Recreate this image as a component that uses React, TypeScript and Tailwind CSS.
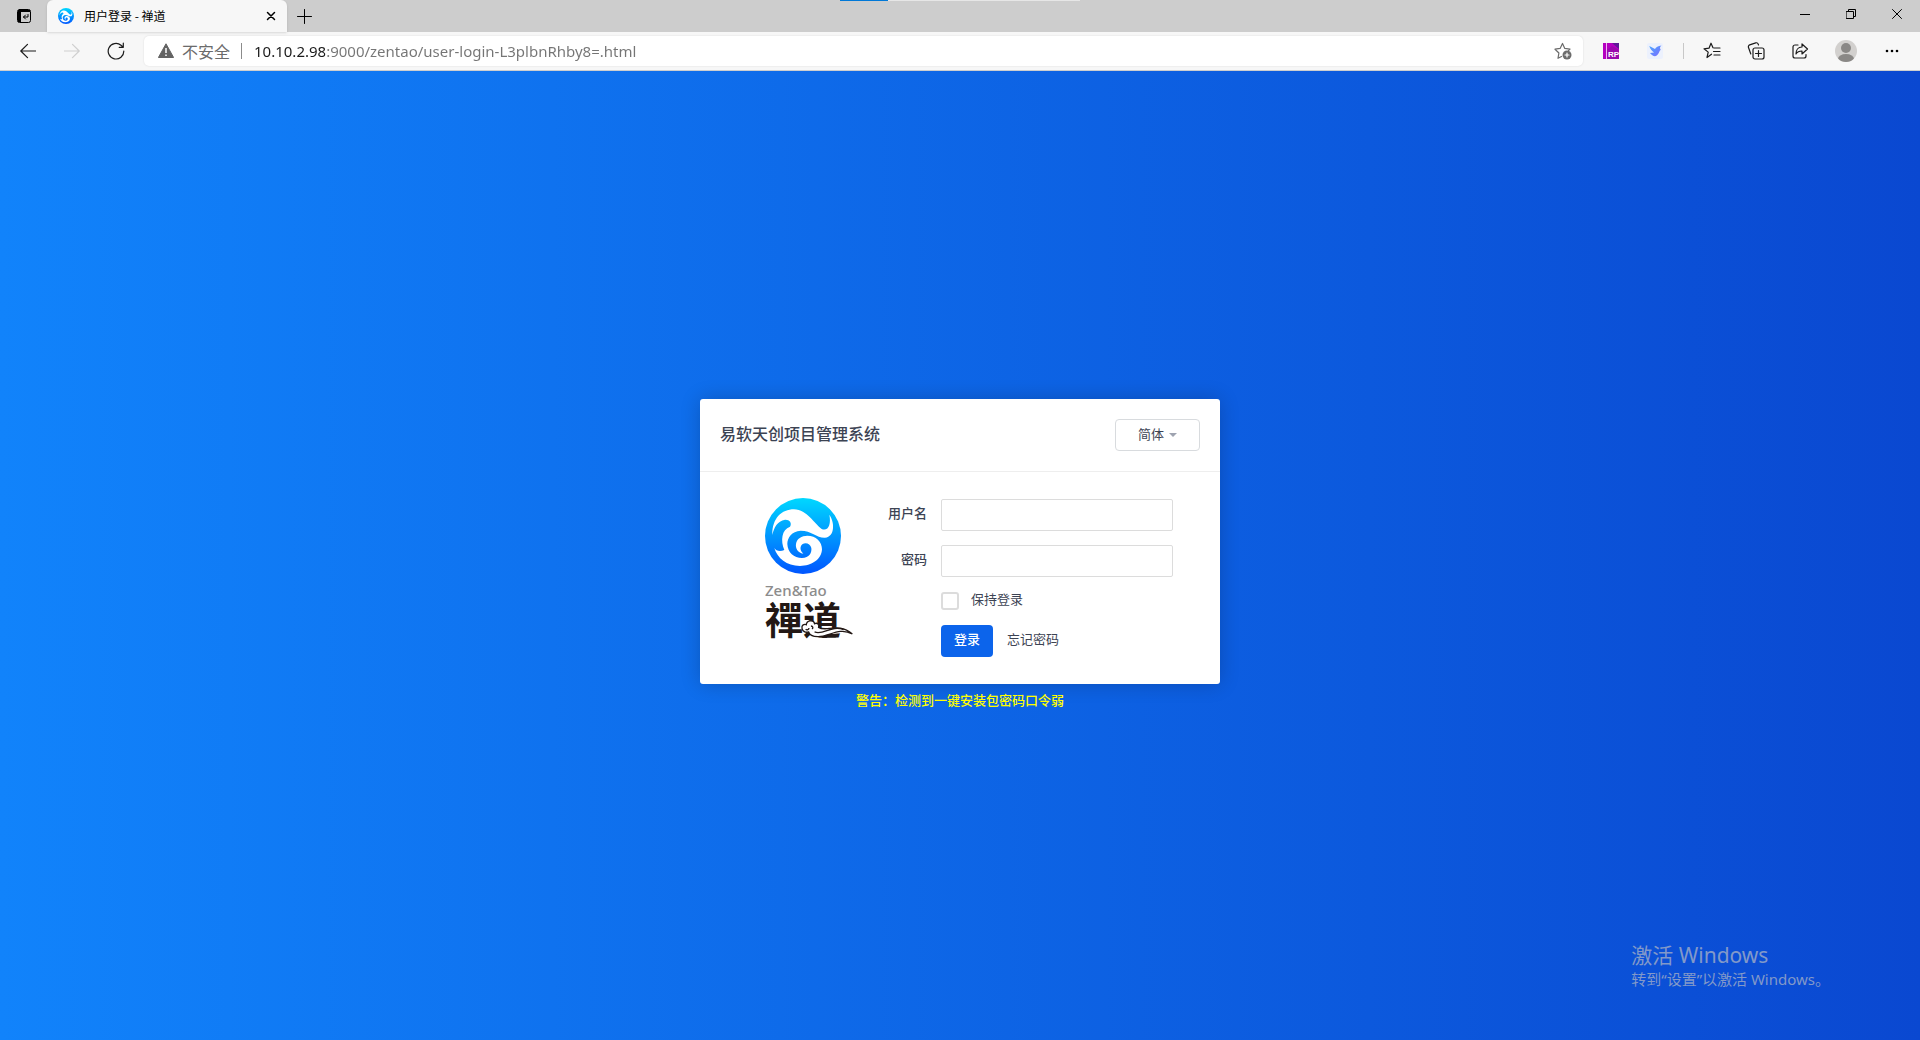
import React, { useState } from "react";

const swirl =
  "M247 435C246 385 275 358 312 358C352 360 372 400 395 417C415 425 424 402 418 374C434 395 436 440 405 443C380 444 365 422 332 422C305 424 292 443 292 462C293 488 312 504 336 504C358 504 366 488 364 474C361 460 346 456 337 463C328 471 331 483 340 491C322 488 316 474 318 462C320 446 335 437 352 437C378 437 396 455 396 478C395 508 365 528 330 528C290 527 262 505 253 474C258 483 270 486 283 480C271 452 275 418 300 410C307 398 298 388 285 389C262 393 252 412 247 435Z";

function WaveLogo({ id, className }: { id: string; className: string }) {
  return (
    <svg viewBox="225 324 228 228" className={className} aria-hidden="true">
      <defs>
        <linearGradient id={id} x1="0" y1="0" x2="0" y2="1">
          <stop offset="0" stopColor="#00d8ff" />
          <stop offset="1" stopColor="#0055ff" />
        </linearGradient>
      </defs>
      <circle cx="339" cy="438" r="114" fill={`url(#${id})`} />
      <path d={swirl} fill="#fff" />
    </svg>
  );
}

function IconButton({ label, className = "", children }: { label: string; className?: string; children: React.ReactNode }) {
  return (
    <button type="button" aria-label={label} className={`flex shrink-0 items-center justify-center ${className}`}>
      {children}
    </button>
  );
}

function Line({ size = 16, className = "", width = 1.2, children }: { size?: number; className?: string; width?: number; children: React.ReactNode }) {
  return (
    <svg
      width={size}
      height={size}
      viewBox={`0 0 ${size} ${size}`}
      fill="none"
      stroke="currentColor"
      strokeWidth={width}
      strokeLinecap="round"
      strokeLinejoin="round"
      className={className}
      aria-hidden="true"
    >
      {children}
    </svg>
  );
}

function TabStrip() {
  return (
    <header className="relative flex h-8 shrink-0 items-stretch bg-[#cdcdcd] text-black">
      <IconButton label="标签页操作" className="w-[47px]">
        <Line size={14} width={1}>
          <rect x=".5" y=".5" width="13" height="13" rx="2" />
          <path d="M1 1h12v2H4v10H1z" fill="currentColor" stroke="none" />
          <path d="M11 5.500v2.500H6.500M8.500 6l-2 2 2 2" />
        </Line>
      </IconButton>
      <div className="flex w-60 items-center rounded-t-md bg-[#f7f7f7] pr-2.5 pl-[11px] shadow-sm">
        <WaveLogo id="tab-logo" className="size-4" />
        <span className="ml-2.5 flex-1 text-[12px] leading-4">用户登录 - 禅道</span>
        <IconButton label="关闭标签页" className="size-3">
          <Line size={10} width={1.5}>
            <path d="m1.500 1.500 7 7m0-7-7 7" />
          </Line>
        </IconButton>
      </div>
      <IconButton label="新建标签页" className="w-[35px]">
        <Line size={15} width={1}>
          <path d="M7.500.500v14M.500 7.500h14" />
        </Line>
      </IconButton>
      <div className="ml-auto flex">
        <IconButton label="最小化" className="w-[46px] pb-1">
          <Line size={10} width={1}>
            <path d="M0 5.500h10" />
          </Line>
        </IconButton>
        <IconButton label="还原" className="w-[46px] pb-1">
          <Line size={10} width={1}>
            <path d="M.500 2.500h7v7h-7zM2.500 2.500v-2h7v7h-2" strokeLinejoin="miter" />
          </Line>
        </IconButton>
        <IconButton label="关闭" className="w-[46px] pb-1">
          <Line size={10} width={1}>
            <path d="m.500.500 9 9m0-9-9 9" />
          </Line>
        </IconButton>
      </div>
      <div className="absolute top-0 left-1/2 h-px w-60 -translate-x-1/2 bg-[#e6e6e6]">
        <div className="h-px w-12 bg-[#0078d7]" />
      </div>
    </header>
  );
}

function Toolbar() {
  return (
    <nav className="flex h-[39px] shrink-0 items-center border-b border-[#cfcfcf] bg-[#f7f7f7] text-[#1b1b1b]">
      <IconButton label="后退" className="ml-1.5 w-11">
        <Line size={16}>
          <path d="M15.500 8H.800M7.500 1.300.800 8l6.700 6.700" />
        </Line>
      </IconButton>
      <IconButton label="前进" className="w-11 text-[#cfcfcf]">
        <Line size={16}>
          <path d="M.500 8h14.700M8.500 1.300 15.200 8l-6.700 6.700" />
        </Line>
      </IconButton>
      <IconButton label="刷新" className="w-11">
        <Line size={18}>
          <path d="M16.800 9A7.800 7.800 0 1 1 14 3.200L16 5M16.300 1.200v4.100h-4.100" />
        </Line>
      </IconButton>
      <div className="ml-1.5 flex h-[30px] flex-1 items-center rounded-[5px] bg-white shadow-[0_0_2px_rgba(0,0,0,0.12)]">
        <button type="button" className="flex items-center pl-3.5 text-[16px] leading-6 text-[#6b6b6b]">
          <svg width="16" height="16" viewBox="0 0 16 16" className="mr-2" aria-hidden="true">
            <path d="M8 .800 15.600 14.500H.400z" fill="#636363" stroke="#636363" strokeLinejoin="round" />
            <path d="M8 5v5M8 11.500v1.500" stroke="#fff" strokeWidth="1.500" />
          </svg>
          不安全
        </button>
        <span className="ml-[11px] h-4 w-px bg-[#8b8b8b]" />
        <input
          aria-label="地址"
          defaultValue="10.10.2.98:9000/zentao/user-login-L3plbnRhby8=.html"
          className="ml-3 h-6 min-w-0 flex-1 bg-linear-to-r from-[#1b1b1b] from-[71px] to-[#757575] to-[71px] bg-clip-text font-['Noto_Sans'] text-[15px] leading-6 text-transparent outline-none"
        />
        <IconButton label="添加到收藏夹" className="mr-2 w-6 text-[#6b6b6b]">
          <Line size={18}>
            <path d="M7.500 14.500 4 16.300l.900-5.300L1 7.200l5.100-.8L8.500 1.500l2.300 4.900 5.200.8-1.500 1.500" />
            <circle cx="13" cy="13" r="4.500" fill="currentColor" stroke="none" />
            <path d="M13 11v4M11 13h4" stroke="#fff" />
          </Line>
        </IconButton>
      </div>
      <IconButton label="Axure RP" className="ml-1.5 w-11">
        <svg width="16" height="16" viewBox="0 0 16 16" aria-hidden="true">
          <path d="M0 0h16v16H0z" fill="#b400c0" />
          <path d="m9 0 7 6V0z" fill="#5e1a96" />
          <path d="m4 7 5-4 7 4v9H4z" fill="#9a08ac" />
          <path d="M3 0h1v16H3z" fill="#f0b4f2" />
          <text x="5" y="14" fill="#fff" fontSize="8" fontWeight="700" fontFamily="Liberation Sans, sans-serif">RP</text>
        </svg>
      </IconButton>
      <IconButton label="飞鸟插件" className="w-11">
        <svg width="16" height="16" viewBox="0 0 16 16" aria-hidden="true">
          <defs>
            <linearGradient id="bird" x1="0" y1="0" x2="1" y2="1">
              <stop stopColor="#4aa8ff" />
              <stop offset="1" stopColor="#7d6bff" />
            </linearGradient>
          </defs>
          <rect width="16" height="16" rx="2" fill="#ecf1fd" />
          <path d="M2.300 3 8 6C9 4 11 3 14.500 2.500 12.800 4 12.600 5 13.800 7 12 7 12.500 12 8 13.300 6 13 4.500 12 3 10L7 9.500C5 8 3 6 2.300 3Z" fill="url(#bird)" />
        </svg>
      </IconButton>
      <span className="mx-1.5 h-4 w-px bg-[#c8c8c8]" />
      <IconButton label="收藏夹" className="w-11">
        <Line size={18}>
          <path d="M8.500 12.200 4 15.500l1.200-5.400L1 6.800l5-.6L8 1.200l2 4.500M11 6h6M10.500 9.500H17M11 13h6" />
        </Line>
      </IconButton>
      <IconButton label="集锦" className="w-11">
        <Line size={18}>
          <rect x="6" y="6" width="11" height="11" rx="2" />
          <path d="M11.500 8.500v6M8.500 11.500h6M3.800 12 1.500 5.500a2 2 0 0 1 1.200-2.600l6-2a2 2 0 0 1 2.500 1.200l.3.900" />
        </Line>
      </IconButton>
      <IconButton label="分享" className="w-11">
        <Line size={18}>
          <path d="M7 3H4a2 2 0 0 0-2 2v9a2 2 0 0 0 2 2h9a2 2 0 0 0 2-2v-1.500" />
          <path d="M11 2v3C7 5 5 8 5 12c1.500-2.500 3.500-3 6-3v3l5.500-5z" />
        </Line>
      </IconButton>
      <IconButton label="用户配置" className="w-12">
        <svg width="22" height="22" viewBox="0 0 22 22" aria-hidden="true">
          <clipPath id="avatar"><circle cx="11" cy="11" r="11" /></clipPath>
          <g clipPath="url(#avatar)">
            <path d="M0 0h22v22H0z" fill="#d2d0ce" />
            <circle cx="11" cy="8" r="5" fill="#8a8886" />
            <ellipse cx="11" cy="19" rx="8" ry="5" fill="#8a8886" />
          </g>
        </svg>
      </IconButton>
      <IconButton label="设置及其他" className="mr-1.5 w-11">
        <svg width="14" height="4" viewBox="0 0 14 4" aria-hidden="true">
          <circle cx="2" cy="2" r="1.300" />
          <circle cx="7" cy="2" r="1.300" />
          <circle cx="12" cy="2" r="1.300" />
        </svg>
      </IconButton>
    </nav>
  );
}

function Brand() {
  return (
    <div className="relative w-[88px] self-start">
      <WaveLogo id="brand-logo" className="size-[76px]" />
      <p className="mt-1.5 font-['Noto_Sans'] text-[15px] leading-5 font-medium text-[#8c8c8c]">Zen&amp;Tao</p>
      <p className="text-[38px] leading-9 font-bold whitespace-nowrap text-[#231815]">禪道</p>
      <svg viewBox="330 685 160 60" className="absolute right-0 -bottom-0.5 h-5 w-[53px]" aria-hidden="true">
        <path
          d="M336 716C334 706 343 702 349 705C350 691 372 689 374 702C383 698 389 704 386 713C410 729 445 696 488 733C448 711 417 742 384 741C367 741 358 735 356 727C346 730 338 725 336 716Z"
          fill="#fff"
          stroke="#231815"
          strokeWidth="4"
        />
        <path d="M347 719c4 3 10 1 10-4M363 709c6 0 8 7 3 9M374 727c27 11 51-22 88-7" fill="none" stroke="#231815" strokeWidth="4" />
      </svg>
    </div>
  );
}

function LoginCard() {
  const [keep, setKeep] = useState(false);
  const field = "h-8 w-full rounded-[2px] border border-[#dcdcdc] px-2 outline-none focus:border-[#0c64eb]";
  return (
    <section className="w-full max-w-[520px] rounded-[3px] bg-white text-[13px] leading-5 text-[#3c4353] shadow-[0_0_20px_rgba(0,0,0,0.2)]">
      <div className="flex items-center justify-between border-b border-[#eee] p-5">
        <h1 className="pb-1 text-[16px] leading-6 font-medium">易软天创项目管理系统</h1>
        <div className="relative">
          <select aria-label="语言" className="h-8 w-[85px] appearance-none rounded-[4px] border border-[#d8dbde] bg-white pb-0.5 pl-[22px] outline-none">
            <option>简体</option>
            <option>繁體</option>
            <option>English</option>
          </select>
          <svg width="8" height="4" viewBox="0 0 8 4" className="pointer-events-none absolute top-3.5 right-[23px]" aria-hidden="true">
            <path d="M0 0h8L4 4z" fill="#9ea3b0" />
          </svg>
        </div>
      </div>
      <form className="flex pt-[26px] pr-[47px] pb-[27px] pl-[65px]" onSubmit={(e) => e.preventDefault()}>
        <Brand />
        <div className="grid flex-1 grid-cols-[74px_1fr] gap-x-3.5 pt-px">
          <label htmlFor="account" className="h-8 text-right leading-7 font-medium">用户名</label>
          <input id="account" type="text" className={field} />
          <label htmlFor="password" className="mt-3.5 h-8 text-right leading-7 font-medium">密码</label>
          <div className="mt-3.5">
            <input id="password" type="password" className={field} />
          </div>
          <div className="col-start-2 mt-3.5 flex h-5 items-center gap-3">
            <input
              id="keep"
              type="checkbox"
              checked={keep}
              onChange={() => setKeep(!keep)}
              className="size-[18px] appearance-none rounded-[3px] border-2 border-[#dcdcdc] bg-white checked:border-[#0c64eb] checked:bg-[#0c64eb]"
            />
            <label htmlFor="keep" className="pb-1">保持登录</label>
          </div>
          <div className="col-start-2 mt-3.5 flex items-center gap-3.5">
            <button type="submit" className="h-8 w-[52px] rounded-[4px] bg-[#0c64eb] pb-1 font-medium text-white">登录</button>
            <a href="#reset" className="pb-1">忘记密码</a>
          </div>
        </div>
      </form>
    </section>
  );
}

export default function App() {
  return (
    <div className="flex min-h-screen flex-col font-['Noto_Sans_CJK_SC',sans-serif]">
      <TabStrip />
      <Toolbar />
      <main className="relative flex flex-1 flex-col items-center justify-center bg-linear-to-r/srgb from-[#1183fb] to-[#0a48d1]">
        <LoginCard />
        <p className="mt-1.5 pb-0.5 text-[13px] leading-5 text-[#ff0]">
          <strong className="font-medium">警告：检测到一键安装包密码口令弱</strong>
        </p>
        <aside className="absolute right-[90px] bottom-[51px] font-['Noto_Sans','Noto_Sans_CJK_SC',sans-serif] text-[#8299c9]">
          <p className="text-[21px] leading-7">激活 Windows</p>
          <p className="text-[15px] leading-5">转到“设置”以激活 Windows。</p>
        </aside>
      </main>
    </div>
  );
}
